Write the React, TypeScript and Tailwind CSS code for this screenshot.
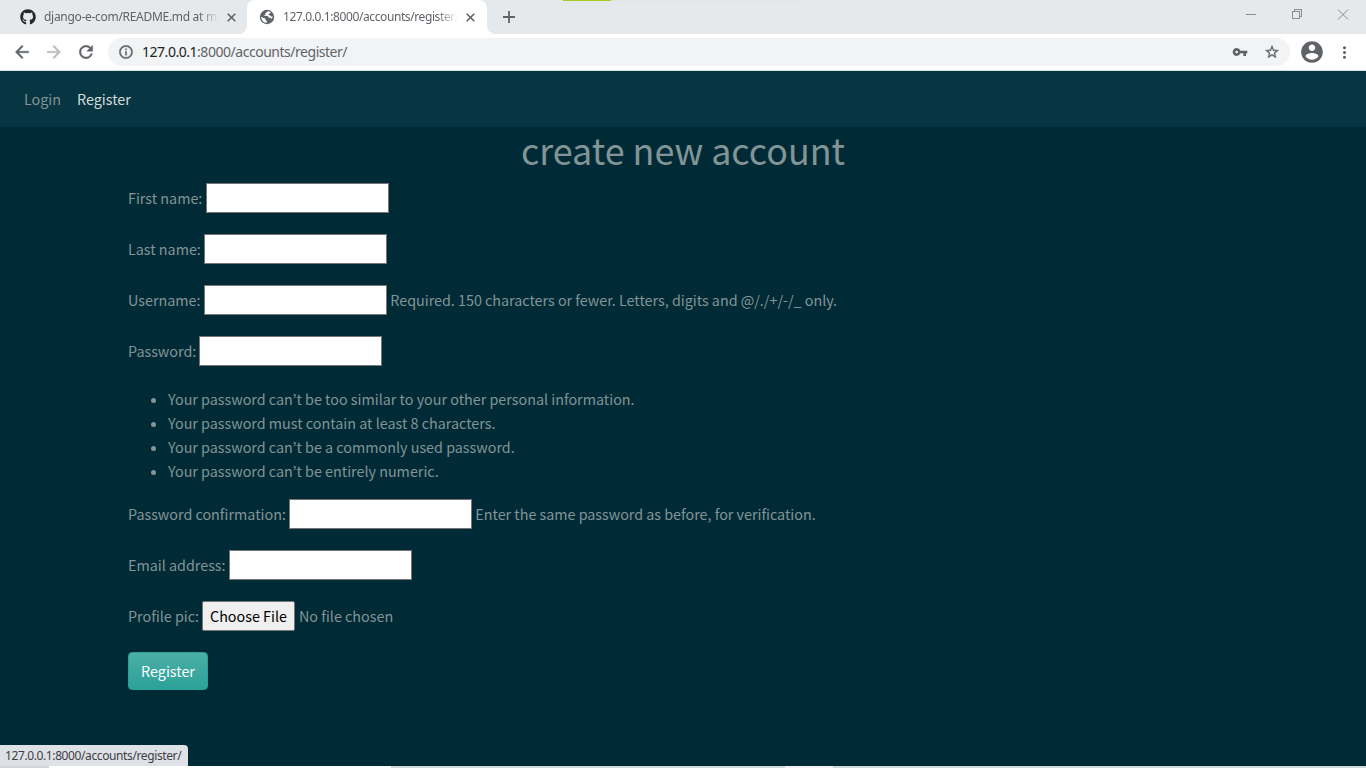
import React from "react";
import { MdVpnKey, MdMoreVert } from "react-icons/md";
import { FaGithub } from "react-icons/fa";

const ui = "font-['Noto_Sans','Open_Sans',sans-serif]";

function Icon({ d, className }: { d: string; className: string }) {
  return (
    <svg className={className} viewBox="0 0 24 24" fill="currentColor" stroke="currentColor" strokeWidth=".5">
      <path d={d} />
    </svg>
  );
}

const BACK = "M20 11H7.830l5.590-5.590L12 4l-8 8 8 8 1.410-1.410L7.830 13H20v-2z";
const FORWARD = "M12 4l-1.410 1.410L16.170 11H4v2h12.170l-5.580 5.590L12 20l8-8z";
const RELOAD = "M17.650 6.350A7.958 7.958 0 0 0 12 4c-4.420 0-7.990 3.580-7.990 8s3.570 8 7.990 8c3.730 0 6.840-2.550 7.730-6h-2.080A5.990 5.990 0 0 1 12 18c-3.310 0-6-2.690-6-6s2.690-6 6-6c1.660 0 3.140.690 4.220 1.780L13 11h7V4l-2.350 2.350z";
const INFO = "M11 7h2v2h-2zm0 4h2v6h-2zm1-9C6.480 2 2 6.480 2 12s4.480 10 10 10 10-4.480 10-10S17.520 2 12 2zm0 18c-4.410 0-8-3.590-8-8s3.590-8 8-8 8 3.590 8 8-3.590 8-8 8z";
const STAR = "M22 9.240l-7.190-.620L12 2 9.190 8.630 2 9.240l5.460 4.730L5.820 21 12 17.270 18.180 21l-1.630-7.030L22 9.240zM12 15.400l-3.760 2.270 1-4.280-3.320-2.880 4.380-.380L12 6.100l1.710 4.040 4.380.380-3.320 2.880 1 4.280L12 15.400z";

function Globe() {
  return (
    <svg className="h-4 w-4 shrink-0" viewBox="0 0 16 16">
      <circle cx="8" cy="8" r="7.200" fill="#5f6368" />
      <path d="M8.600 2.200c-.2 1.100-1.300 1.200-2 1.900-.4.500.1 1.300-.6 1.700-.5.300-.9.400-.7 1 .5.500 2.400.2 3.500.5.900.3.600 1.200 1.400 1.500.7.300 1.700 0 2.100.5.200.5-.3 1-.7 1.500 1.200-.7 2.100-2 2.200-3.300-.8.300-1.600.1-2-.5-.4-.700-1.400-.3-1.900-.9-.5-.6-.2-1.300.4-1.700.6-.3 1.300-.3 1.500-1-.8-.7-2-1.200-3.200-1.200zM2.200 7.400c-.2 3.300 2.300 6.200 5.600 6.400v-1.600c-.2-.7-.9-.7-1.300-1.200-.3-.5.1-1.300-.5-1.700-.7-.400-1.500-.1-2.200-.6z" fill="#fff" />
    </svg>
  );
}

function Tab({ title, active, icon }: { title: string; active?: boolean; icon: React.ReactNode }) {
  return (
    <div className={active ? "relative flex h-[34px] w-[240px] items-center rounded-t-lg bg-white pl-[12px]" : "relative flex h-[34px] w-[247px] items-center pl-[20px]"}>
      {active && (
        <>
          <svg className="absolute bottom-0 -left-2 h-2 w-2" viewBox="0 0 8 8"><path d="M8 0v8H0a8 8 0 0 0 8-8z" fill="#fff" /></svg>
          <svg className="absolute -right-2 bottom-0 h-2 w-2" viewBox="0 0 8 8"><path d="M0 0v8h8a8 8 0 0 1-8-8z" fill="#fff" /></svg>
        </>
      )}
      {icon}
      <span className={(active ? "tracking-[-0.4px] " : "tracking-[-0.3px] ") + "ml-[8px] w-[175px] overflow-hidden text-[12px] leading-4 whitespace-nowrap text-[#5f6368] [mask-image:linear-gradient(to_right,#000_88%,transparent)]"}>{title}</span>
      <svg className="ml-[8px] h-[9px] w-[9px] shrink-0" viewBox="0 0 9 9"><path d="M.7.7l7.600 7.600M8.300.7L.7 8.300" stroke="#5f6368" strokeWidth="1.600" /></svg>
    </div>
  );
}

function Field({ label, width, help }: { label: string; width: string; help?: string }) {
  return (
    <div className="mb-[21px] flex h-[30px] items-center">
      <label className={"shrink-0 whitespace-nowrap " + width}>{label}</label>
      <input className="h-[30px] w-[183px] shrink-0 border border-[#767676] bg-white outline-none" />
      {help && <span className="ml-[3.300px] tracking-[-0.010px] whitespace-nowrap">{help}</span>}
    </div>
  );
}

const rules = [
  "Your password can’t be too similar to your other personal information.",
  "Your password must contain at least 8 characters.",
  "Your password can’t be a commonly used password.",
  "Your password can’t be entirely numeric.",
];

export default function App() {
  return (
    <div lang="en" className="flex h-[768px] w-[1366px] flex-col overflow-hidden bg-[#002b36] font-['Noto_Sans_CJK_KR','Open_Sans',sans-serif] text-[14.33px] leading-6 text-[#839496]">
      <header className={"shrink-0 " + ui}>
        <div className="relative flex h-[34px] bg-[#e5e9ec]">
          <div className="absolute top-0 left-[563px] h-px w-[48px] bg-[#a5cd28]" />
          <div className="absolute top-0 left-[611px] h-px w-[192px] bg-[#e4e4e4]" />
          <Tab title="django-e-com/README.md at m" icon={<FaGithub className="h-4 w-4 shrink-0 text-[#24292e]" />} />
          <Tab active title="127.0.0.1:8000/accounts/register/" icon={<Globe />} />
          <svg className="mt-[11px] ml-[16px] h-[12px] w-[12px]" viewBox="0 0 12 12"><path d="M6 0v12M0 6h12" stroke="#5f6368" strokeWidth="1.800" /></svg>
          <svg className="mt-[8px] ml-auto h-[14px] w-[104px]" viewBox="0 0 104 14" fill="none" stroke="#8b8d8f" shapeRendering="crispEdges">
            <path d="M0 6.500h10M46.500 3.500h7v7h-7zM48.500 3.500v-2h7v7h-2" />
            <path d="M92 1.500l10 10M102 1.500l-10 10" shapeRendering="auto" />
          </svg>
          <div className="w-[16px]" />
        </div>
        <div className="flex h-[37px] items-center border-b border-[#d5dcdd] bg-white pl-[12px] text-[#5f6368]">
          <Icon d={BACK} className="h-5 w-5" />
          <Icon d={FORWARD} className="ml-[12px] h-5 w-5 text-[#babcbe]" />
          <Icon d={RELOAD} className="ml-[12px] h-5 w-5" />
          <div className="ml-[12px] flex h-7 w-[1182px] items-center rounded-full bg-[#f1f3f4] pl-[10px]">
            <Icon d={INFO} className="h-4 w-4" />
            <span className="ml-[8px] text-[14px] leading-5 tracking-[-0.47px]"><span className="text-[#202124]">127.0.0.1</span>:8000/accounts/register/</span>
            <MdVpnKey className="ml-auto h-4 w-4" />
            <Icon d={STAR} className="mr-[10px] ml-[16px] h-4 w-4" />
          </div>
          <svg className="ml-[9px] h-[26px] w-[26px]" viewBox="0 0 24 24" fill="currentColor">
            <path d="M12 2C6.480 2 2 6.480 2 12s4.480 10 10 10 10-4.480 10-10S17.520 2 12 2zm0 3c1.660 0 3 1.340 3 3s-1.340 3-3 3-3-1.340-3-3 1.340-3 3-3zm0 14.200c-2.500 0-4.710-1.280-6-3.220.030-1.990 4-3.080 6-3.080 1.990 0 5.970 1.090 6 3.080-1.290 1.940-3.500 3.220-6 3.220z" />
          </svg>
          <MdMoreVert className="ml-[10px] h-[19px] w-[19px]" />
        </div>
      </header>
      <nav className="flex h-14 shrink-0 items-center gap-4 bg-[#073642] px-6 pb-px">
        <a>Login</a>
        <a className="text-[#d5dcdc]">Register</a>
      </nav>
      <main className="flex-1 px-32">
        <h1 className="h-[56px] text-center text-[35.83px] leading-[45px]">create new account</h1>
        <Field label="First name:" width="w-[78px]" />
        <Field label="Last name:" width="w-[76px]" />
        <Field label="Username:" width="w-[76px]" help="Required. 150 characters or fewer. Letters, digits and @/./+/-/_ only." />
        <Field label="Password:" width="w-[71px]" />
        <ul className="mb-4 pl-[22.500px]">
          {rules.map((rule) => (
            <li key={rule} className="flex items-center whitespace-nowrap">
              <span className="mt-[2px] mr-[12.500px] h-[5px] w-[5px] rounded-full bg-[#839496]" />
              {rule}
            </li>
          ))}
        </ul>
        <Field label="Password confirmation:" width="w-[161px]" help="Enter the same password as before, for verification." />
        <Field label="Email address:" width="w-[101px]" />
        <div className="mb-[21px] flex h-[30px] items-center">
          <label className="w-[74px]">Profile pic:</label>
          <button className="h-[30px] w-[93px] rounded-[2px] border border-[#767676] bg-[#efefef] leading-6 whitespace-nowrap text-black">Choose File</button>
          <span className="ml-[4px]">No file chosen</span>
        </div>
        <button className="h-[38px] w-[80px] rounded-[4px] border border-[#2aa198] bg-gradient-to-b from-[#4aafa7] to-[#2aa198] text-white">Register</button>
      </main>
      <footer className={"shrink-0 " + ui}>
        <div className="flex h-[21px] w-[188px] items-center rounded-tr-[4px] bg-[#dee1e6] pl-[5px] text-[12px] leading-4 tracking-[-0.39px] text-[#3c4043]">127.0.0.1:8000/accounts/register/</div>
        <div className="flex h-[2px]">
          <div className="w-[49px] bg-[#d0d4d4]" />
          <div className="w-[342px] bg-white" />
          <div className="w-[394px] bg-[#d0d8d6]" />
          <div className="w-[48px] bg-[#f2f4f3]" />
          <div className="flex-1 bg-[#d0d8d6]" />
        </div>
      </footer>
    </div>
  );
}
